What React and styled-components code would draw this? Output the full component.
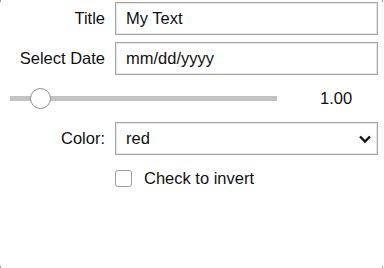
import React, { useState } from 'react';
import styled, { createGlobalStyle } from 'styled-components';

// ------------------------------------ Global ------------------------------------
const GlobalStyle = createGlobalStyle`
  html, body {
    margin: 0;
    padding: 0;
    background: #fff;
  }
  body {
    font-family: "Liberation Sans", Arial, sans-serif;
    font-size: 16.5px;
    color: #111;
  }
`;

// ------------------------------------ Styled Components ------------------------------------
const Wrapper = styled.div`
  position: relative;
  width: 384px;
  height: 268px;
  box-sizing: border-box;
  padding: 2px 6px 0 0;
  display: flex;
  flex-direction: column;
  gap: 7px;
`;

const Row = styled.div`
  display: grid;
  grid-template-columns: 105px 1fr;
  column-gap: 10px;
  align-items: center;
  height: 33px;
`;

const Label = styled.label`
  text-align: right;
  white-space: nowrap;
`;

const TextInput = styled.input`
  box-sizing: border-box;
  height: 33px;
  width: 100%;
  border: 1px solid #a8a8a8;
  box-shadow: inset 0 0 0 1px #e4e4e4;
  border-radius: 0;
  padding: 0 10px;
  font: inherit;
  color: #111;
  outline: none;
  &::placeholder {
    color: #111;
  }
`;

const SliderRow = styled.div`
  display: flex;
  align-items: center;
  height: 33px;
  padding-left: 10px;
`;

const Track = styled.div`
  position: relative;
  width: 267px;
  height: 5px;
  background: #c2c2c2;
`;

const Thumb = styled.div`
  position: absolute;
  top: 50%;
  width: 21px;
  height: 21px;
  box-sizing: border-box;
  margin-top: -10.5px;
  margin-left: -10.5px;
  border-radius: 50%;
  background: #fff;
  border: 1px solid #8e8e8e;
`;

const SliderValue = styled.span`
  margin-left: 43px;
`;

const SelectBox = styled.div`
  position: relative;
  box-sizing: border-box;
  height: 33px;
  border: 1px solid #a8a8a8;
  box-shadow: inset 0 0 0 1px #e4e4e4;
  display: flex;
  align-items: center;
  justify-content: space-between;
  padding: 0 5px 0 10px;
`;

const CheckRow = styled.div`
  display: grid;
  grid-template-columns: 105px 1fr;
  column-gap: 10px;
  align-items: center;
  height: 33px;
`;

const CheckLabel = styled.label`
  grid-column: 2;
  display: flex;
  align-items: center;
  gap: 12px;
`;

const Box = styled.span`
  width: 17px;
  height: 17px;
  box-sizing: border-box;
  border: 1px solid #9c9c9c;
  border-radius: 3px;
  background: #fff;
`;

const CornerDot = styled.span`
  position: absolute;
  width: 1px;
  height: 2px;
  background: #9a9a9a;
  ${(p) => p.$pos}
`;

// ------------------------------------ Render ------------------------------------
export default function App() {
  const [value] = useState(1);
  const pct = 0.085;

  return (
    <>
      <GlobalStyle />
      <Wrapper>
        <Row>
          <Label>Title</Label>
          <TextInput defaultValue="My Text" />
        </Row>
        <Row>
          <Label>Select Date</Label>
          <TextInput placeholder="mm/dd/yyyy" />
        </Row>
        <SliderRow>
          <Track>
            <Thumb style={{ left: `${10 + pct * 247}px` }} />
          </Track>
          <SliderValue>{value.toFixed(2)}</SliderValue>
        </SliderRow>
        <Row>
          <Label>Color:</Label>
          <SelectBox>
            <span>red</span>
            <svg width="14" height="10" viewBox="0 0 14 10">
              <path d="M2 2.5 L7 7.5 L12 2.5" fill="none" stroke="#111" strokeWidth="2.4" />
            </svg>
          </SelectBox>
        </Row>
        <CheckRow>
          <CheckLabel>
            <Box />
            <span>Check to invert</span>
          </CheckLabel>
        </CheckRow>
        <CornerDot $pos="left: 0; top: 0;" />
        <CornerDot $pos="right: 1px; top: 0;" />
        <CornerDot $pos="left: 0; bottom: 0;" />
        <CornerDot $pos="right: 1px; bottom: 0;" />
      </Wrapper>
    </>
  );
}
